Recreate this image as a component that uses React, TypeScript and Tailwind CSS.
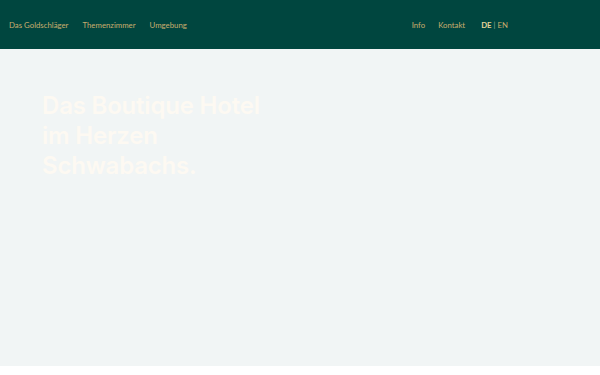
import React from "react";

const navLeft = ["Das Goldschläger", "Themenzimmer", "Umgebung"];
const navRight = ["Info", "Kontakt"];

export default function App() {
  return (
    <div className="w-[600px] bg-white font-['Inter',sans-serif]">
      <header className="flex h-[49px] items-center bg-[#00463f] pl-[9px] pr-[92px] pt-[2px] font-['Lato',sans-serif] text-[7.8px] text-[#c9ad6e]">
        <nav className="flex gap-[14px]">
          {navLeft.map((item) => (
            <span key={item}>{item}</span>
          ))}
        </nav>
        <nav className="ml-auto flex items-center gap-[13px]">
          {navRight.map((item) => (
            <span key={item}>{item}</span>
          ))}
          <span className="ml-[3px] flex items-center gap-[2px]">
            <span className="font-bold text-[#e4d39a]">DE</span>
            <span className="text-[#8fa79c]">|</span>
            <span>EN</span>
          </span>
        </nav>
      </header>
      <section className="h-[317px] bg-[#f1f5f5] px-[42px] pt-[42px]">
        <h1 className="text-[24px] font-semibold leading-[30px] tracking-[-0.2px] text-[#fdf9f2]">
          Das Boutique Hotel
          <br />
          im Herzen
          <br />
          Schwabachs.
        </h1>
      </section>
    </div>
  );
}
